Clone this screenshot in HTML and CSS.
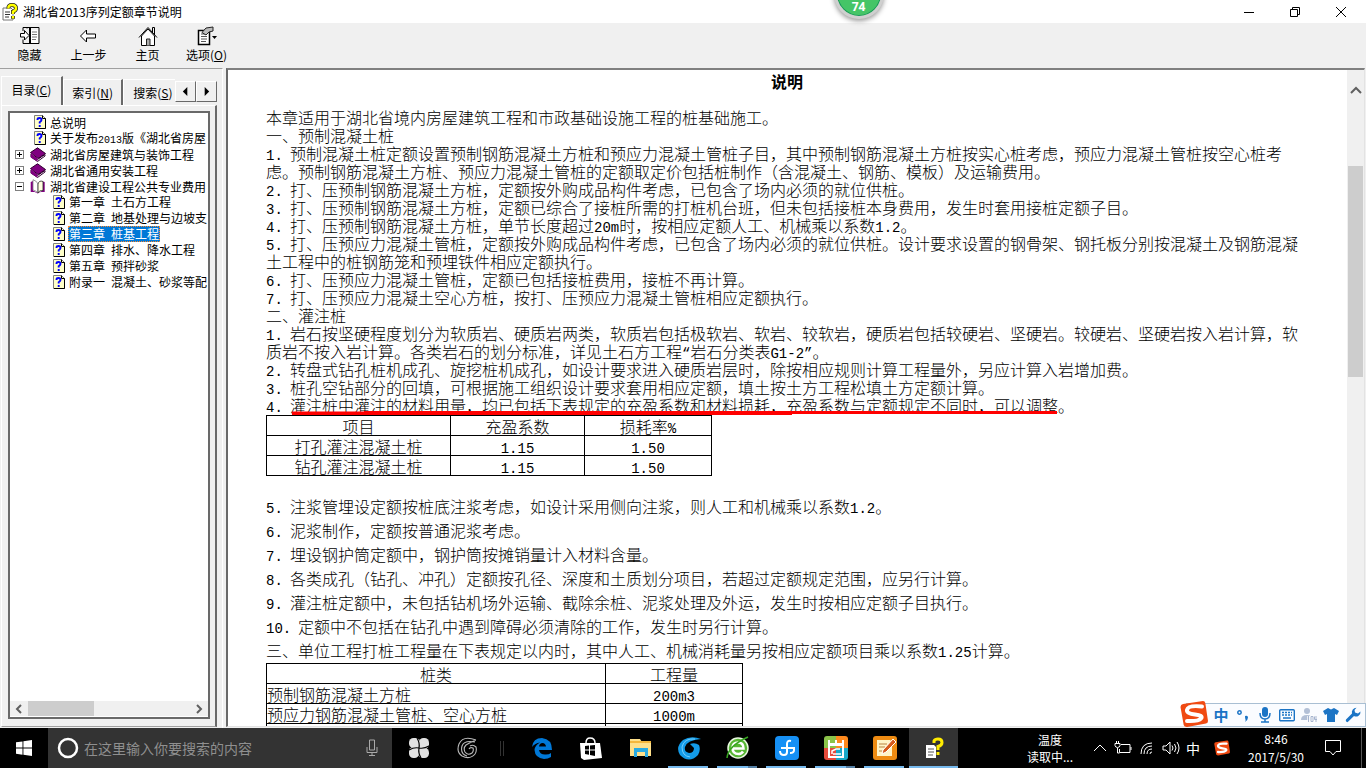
FILE: index.html
```
<!DOCTYPE html>
<html lang="zh-CN">
<head>
<meta charset="utf-8">
<title>湖北省2013序列定额章节说明</title>
<link rel="stylesheet" href="styles.css">
</head>
<body>
<svg class="defs" aria-hidden="true">
  <symbol id="page" viewBox="0 0 12 14"><path d="M.5.5h8l3 3v10H.5z" fill="#ffffc8" stroke="#808080"/><path d="M8.500 .5v3h3v10H1" fill="none" stroke="#000"/><path d="M3.500 5V4.500Q3.500 3 5.500 3T7.500 5Q7.500 6 5.700 7.200V8.600M5.700 10v2" fill="none" stroke="#00f" stroke-width="1.900"/></symbol>
  <symbol id="book" viewBox="0 0 16 15"><path d="M1 7v3l6.500 4.500L15 9V7.500L7.500 12.500z" fill="#fff" stroke="#300030"/><path d="M.5 5.500 7.500.8 15.500 6.500 8 11.500z" fill="#800080" stroke="#300030"/><path d="M.8 6v4.500l6.700 4v-2.800z" fill="#800080"/></symbol>
  <symbol id="openbook" viewBox="0 0 16 15"><path d="M.7 3v10h4l3 1.500 3-1.500h4V3l-2-.5v9L8 14 3 11.500V2z" fill="#800080"/><path d="M3 .7Q7 2 8 5v9Q7 12 3 11z" fill="#fff" stroke="#808080" stroke-width=".8"/><path d="M8 5q1-4 5-2.500v9Q9 11 8 14z" fill="#ffffe0" stroke="#222" stroke-width=".8"/></symbol>
  <symbol id="helpicon" viewBox="0 0 18 18"><path d="M2 5h8l2 2v10H2z" fill="#fff" stroke="#777"/><path d="M4 9h5M4 11.500h5M4 14h4" stroke="#333"/><path d="M7.500 5.500Q7 2 11 2t4 3.500q0 2-3 3.200V11M12 13v2.800" fill="none" stroke="#222" stroke-width="4"/><path d="M7.500 5.500Q7 2 11 2t4 3.500q0 2-3 3.200V11M12 13v2.500" fill="none" stroke="#ff0" stroke-width="2.500"/></symbol>
  <symbol id="sogou" viewBox="0 0 28 28"><path d="M3 4 23 1q2 0 2.300 2L28 21q0 2-2 2.600L7 27q-3 0-3.300-2L.5 7Q.5 4.500 3 4z" fill="#f04a12"/><path d="M22 6.500Q8 5 7 10q-.7 3.500 8 4.500t6 4q-2.500 3-14 2.500" fill="none" stroke="#fff" stroke-width="4" stroke-linecap="round"/></symbol>
</svg>

<header class="titlebar">
  <svg class="appicon" viewBox="0 0 18 18"><use href="#helpicon"/></svg>
  <h1>湖北省2013序列定额章节说明</h1>
  <div class="winbtns">
    <button aria-label="最小化"><svg viewBox="0 0 12 12"><path d="M1 6.500h10" /></svg></button>
    <button aria-label="还原"><svg viewBox="0 0 12 12"><path d="M1.500 3.500h7v7h-7zM3.500 3.500v-2h7v7h-2"/></svg></button>
    <button aria-label="关闭"><svg viewBox="0 0 12 12"><path d="M1 1l10 10M11 1 1 11"/></svg></button>
  </div>
  <div class="badge">74</div>
</header>

<nav class="toolbar">
  <button><svg width="20" height="20" viewBox="0 0 20 20"><path d="M7 2.500V1.500h12v16H3v-4M10.500 2v15M9.500 2v15M3 1.500h7M3 1.500V5" fill="none" stroke="#000"/><path d="M11 4h7v13h-7z" fill="#fff"/><path d="M12 6h5M12 8.500h5M12 11h5M12 13.500h4" stroke="#777"/><path d="M.5 7.500h4v-3L9 9.500 4.500 14v-3h-4z" fill="#fff" stroke="#000"/></svg><span>隐藏</span></button>
  <button><svg width="20" height="20" viewBox="0 0 20 20"><path d="M1.500 10 7.500 4v4h9v4h-9v4z" fill="#fff" stroke="#000"/></svg><span>上一步</span></button>
  <button><svg width="20" height="20" viewBox="0 0 20 20"><path d="M3.500 10v9.500h13V10L10 3z" fill="#fff" stroke="#000"/><path d="M1 11.500 10 1.500l9 10M14.500 6V1.500h2V9" fill="none" stroke="#000"/><path d="M8.500 19.500V13h3.500v6.500" fill="#aaa" stroke="#222"/></svg><span>主页</span></button>
  <button><svg width="20" height="20" viewBox="0 0 20 20"><path d="M1.500 4.500h11v14h-11z" fill="#fff" stroke="#000" stroke-width="1.500"/><path d="M4 8h5M4 10.500h6M4 13h6M4 15.500h5" stroke="#555"/><path d="M5 6.500 9 2l7-1v4l-4 1-3 3z" fill="#bbb" stroke="#222"/><path d="M15 10h5l-2.500 3z"/></svg><span>选项(<u>O</u>)</span></button>
</nav>

<main class="main">
  <aside class="side">
    <div class="tabs">
      <button class="tab on">目录(<u>C</u>)</button><button class="tab">索引(<u>N</u>)</button><button class="tab last">搜索(<u>S</u>)</button>
      <button class="arrow" aria-label="向左"><svg viewBox="0 0 10 10"><path d="M7 0v10L2 5z"/></svg></button><button class="arrow" aria-label="向右"><svg viewBox="0 0 10 10"><path d="M3 0v10l5-5z"/></svg></button>
    </div>
    <div class="sheet">
      <div class="treebox">
        <ul class="tree">
          <li><i class="box none"></i><svg class="pg"><use href="#page"/></svg><a href="#a">总说明</a></li>
          <li><i class="box none"></i><svg class="pg"><use href="#page"/></svg><a href="#a">关于发布<span class="h">2013</span>版《湖北省房屋</a></li>
          <li><i class="box"></i><svg class="bk"><use href="#book"/></svg><a href="#a">湖北省房屋建筑与装饰工程</a></li>
          <li><i class="box"></i><svg class="bk"><use href="#book"/></svg><a href="#a">湖北省通用安装工程</a></li>
          <li><i class="box open"></i><svg class="bk"><use href="#openbook"/></svg><a href="#a">湖北省建设工程公共专业费用</a></li>
          <li class="sub"><svg class="pg"><use href="#page"/></svg><a href="#a">第一章<span class="h"> </span>土石方工程</a></li>
          <li class="sub"><svg class="pg"><use href="#page"/></svg><a href="#a">第二章<span class="h"> </span>地基处理与边坡支</a></li>
          <li class="sub"><svg class="pg"><use href="#page"/></svg><a class="sel" href="#a">第三章<span class="h"> </span>桩基工程</a></li>
          <li class="sub"><svg class="pg"><use href="#page"/></svg><a href="#a">第四章<span class="h"> </span>排水、降水工程</a></li>
          <li class="sub"><svg class="pg"><use href="#page"/></svg><a href="#a">第五章<span class="h"> </span>预拌砂浆</a></li>
          <li class="sub"><svg class="pg"><use href="#page"/></svg><a href="#a">附录一<span class="h"> </span>混凝土、砂浆等配</a></li>
        </ul>
        <div class="hscroll">
          <button aria-label="左滚"><svg viewBox="0 0 10 10"><path d="M7 1 3 5l4 4"/></svg></button>
          <div class="htrack"><div class="hthumb"></div></div>
          <button aria-label="右滚"><svg viewBox="0 0 10 10"><path d="m3 1 4 4-4 4"/></svg></button>
        </div>
      </div>
    </div>
  </aside>

  <div class="viewer">
    <article class="doc">
      <h2>说明</h2>
      <p>本章适用于湖北省境内房屋建筑工程和市政基础设施工程的桩基础施工。</p>
      <p>一、预制混凝土桩</p>
      <p><span class="n c3">1.</span>预制混凝土桩定额设置预制钢筋混凝土方桩和预应力混凝土管桩子目，其中预制钢筋混凝土方桩按实心桩考虑，预应力混凝土管桩按空心桩考虑。预制钢筋混凝土方桩、预应力混凝土管桩的定额取定价包括桩制作（含混凝土、钢筋、模板）及运输费用。</p>
      <p><span class="n c3">2.</span>打、压预制钢筋混凝土方桩，定额按外购成品构件考虑，已包含了场内必须的就位供桩。</p>
      <p><span class="n c3">3.</span>打、压预制钢筋混凝土方桩，定额已综合了接桩所需的打桩机台班，但未包括接桩本身费用，发生时套用接桩定额子目。</p>
      <p><span class="n c3">4.</span>打、压预制钢筋混凝土方桩，单节长度超过<span class="n">20m</span>时，按相应定额人工、机械乘以系数<span class="n">1.2</span>。</p>
      <p><span class="n c3">5.</span>打、压预应力混凝土管桩，定额按外购成品构件考虑，已包含了场内必须的就位供桩。设计要求设置的钢骨架、钢托板分别按混凝土及钢筋混凝土工程中的桩钢筋笼和预埋铁件相应定额执行。</p>
      <p><span class="n c3">6.</span>打、压预应力混凝土管桩，定额已包括接桩费用，接桩不再计算。</p>
      <p><span class="n c3">7.</span>打、压预应力混凝土空心方桩，按打、压预应力混凝土管桩相应定额执行。</p>
      <p>二、灌注桩</p>
      <p><span class="n c3">1.</span>岩石按坚硬程度划分为软质岩、硬质岩两类，软质岩包括极软岩、软岩、较软岩，硬质岩包括较硬岩、坚硬岩。较硬岩、坚硬岩按入岩计算，软质岩不按入岩计算。各类岩石的划分标准，详见土石方工程<span class="n">“</span>岩石分类表<span class="n">G1-2”</span>。</p>
      <p><span class="n c3">2.</span>转盘式钻孔桩机成孔、旋挖桩机成孔，如设计要求进入硬质岩层时，除按相应规则计算工程量外，另应计算入岩增加费。</p>
      <p><span class="n c3">3.</span>桩孔空钻部分的回填，可根据施工组织设计要求套用相应定额，填土按土方工程松填土方定额计算。</p>
      <p class="marked"><span class="n c3">4.</span>灌注桩中灌注的材料用量，均已包括下表规定的充盈系数和材料损耗，充盈系数与定额规定不同时，可以调整。<svg class="redline" viewBox="0 0 765 6" preserveAspectRatio="none"><path d="M0 1.500h72v-.5H765v3H500v1H0z" fill="#f00"/></svg></p>
      <table class="t1">
        <tr><th>项目</th><th>充盈系数</th><th>损耗率<span class="n">%</span></th></tr>
        <tr><td>打孔灌注混凝土桩</td><td><span class="n">1.15</span></td><td><span class="n">1.50</span></td></tr>
        <tr><td>钻孔灌注混凝土桩</td><td><span class="n">1.15</span></td><td><span class="n">1.50</span></td></tr>
      </table>
      <div class="loose">
        <p><span class="n c3">5.</span>注浆管埋设定额按桩底注浆考虑，如设计采用侧向注浆，则人工和机械乘以系数<span class="n">1.2</span>。</p>
        <p><span class="n c3">6.</span>泥浆制作，定额按普通泥浆考虑。</p>
        <p><span class="n c3">7.</span>埋设钢护筒定额中，钢护筒按摊销量计入材料含量。</p>
        <p><span class="n c3">8.</span>各类成孔（钻孔、冲孔）定额按孔径、深度和土质划分项目，若超过定额规定范围，应另行计算。</p>
        <p><span class="n c3">9.</span>灌注桩定额中，未包括钻机场外运输、截除余桩、泥浆处理及外运，发生时按相应定额子目执行。</p>
        <p><span class="n c4">10.</span>定额中不包括在钻孔中遇到障碍必须清除的工作，发生时另行计算。</p>
        <p>三、单位工程打桩工程量在下表规定以内时，其中人工、机械消耗量另按相应定额项目乘以系数<span class="n">1.25</span>计算。</p>
      </div>
      <table class="t2">
        <tr><th>桩类</th><th>工程量</th></tr>
        <tr><td>预制钢筋混凝土方桩</td><td><span class="n">200m3</span></td></tr>
        <tr><td>预应力钢筋混凝土管桩、空心方桩</td><td><span class="n">1000m</span></td></tr>
        <tr><td></td><td></td></tr>
      </table>
    </article>
    <div class="vscroll">
      <button aria-label="上滚"><svg viewBox="0 0 12 10"><path d="M1 8l5-5 5 5"/></svg></button>
      <div class="vtrack"><div class="vthumb"></div></div>
      <button aria-label="下滚"><svg viewBox="0 0 12 10"><path d="M1 2l5 5 5-5"/></svg></button>
    </div>
  </div>

  <div class="ime">
    <svg class="imelogo" viewBox="0 0 28 28"><use href="#sogou"/></svg>
    <button class="zh">中</button>
    <button aria-label="标点"><svg viewBox="0 0 16 16"><circle cx="4.500" cy="5.500" r="1.700" fill="none" stroke="#1b74c5" stroke-width="1.500"/><path d="M10 9q3-1 3 1.500T10 15q1-2 .5-2.500T10 9z"/></svg></button>
    <button aria-label="语音"><svg viewBox="0 0 16 16"><rect x="5" y="0" width="6" height="10" rx="3"/><path d="M3 6q0 6 5 6t5-6M8 12v3M4 15h8" fill="none" stroke="#1b74c5" stroke-width="1.500"/></svg></button>
    <button aria-label="键盘"><svg viewBox="0 0 16 16"><rect x=".7" y="2.700" width="14.600" height="11" rx="1" fill="none" stroke="#1b74c5" stroke-width="1.400"/><path d="M3 5.500h10M3 8h10" stroke="#1b74c5" stroke-width="1.600" stroke-dasharray="2 1"/><path d="M4 11h8" stroke="#1b74c5" stroke-width="1.500"/></svg></button>
    <button aria-label="账户"><svg viewBox="0 0 16 16"><circle cx="6" cy="4" r="3" fill="#b3c0d6"/><path d="M0 13q0-5 6-5t6 5z" fill="#b3c0d6"/><path d="M7.500 9v6M10 9.500h2v5h-2zM13 9.500v3h2.500M15 9v6" fill="none" stroke="#fff" stroke-width="2.400"/><path d="M7.500 9v6M10 9.500h2v5h-2zM13.500 9.500v3H16M15 9v6" fill="none" stroke="#a5b4cf"/></svg></button>
    <button aria-label="皮肤"><svg viewBox="0 0 16 16"><path d="m5 1 3 1.500L11 1l5 3-2 4-2-1v8H4V7L2 8 0 4z"/></svg></button>
    <button aria-label="工具"><svg viewBox="0 0 16 16"><path d="M11.500.8A4.500 4.500 0 0 0 7 6.500L1 12.500q-.8 2 1.500 2.700L9 9a4.500 4.500 0 0 0 6.500-4.500L13 6.500 10 5.500 9.500 3z"/></svg></button>
  </div>
</main>

<footer class="taskbar">
  <button class="start" aria-label="开始"><svg viewBox="0 0 16 16"><path d="M0 2.300 6.500 1.400v6.200H0zM7.400 1.300 16 0v7.600H7.400zM0 8.500h6.500v6.200L0 13.800zM7.400 8.500H16V16l-8.600-1.200z" fill="#fff"/></svg></button>
  <div class="search">
    <svg width="22" height="22" viewBox="0 0 22 22"><circle cx="11" cy="11" r="9" fill="none" stroke="#fff" stroke-width="2.500"/></svg>
    <input type="text" aria-label="搜索" placeholder="在这里输入你要搜索的内容">
    <svg width="12" height="18" viewBox="0 0 12 18"><path d="M3.500 1h5v10h-5zM1 8v5.500h10V8M6 14v3M3 16.500h6" fill="none" stroke="#aaa"/></svg>
  </div>
  <div class="pins">
    <button aria-label="四叶"><svg viewBox="0 0 24 24"><g fill="#e2e2e2"><rect x="2" y="2" width="11" height="10" rx="4.500"/><rect x="12" y="2" width="10" height="11" rx="4.500"/><rect x="11" y="12" width="11" height="10" rx="4.500"/><rect x="2" y="11" width="10" height="11" rx="4.500"/><path d="M8 8h8v8H8z"/></g><path d="M12 12Q13 7 10 2M12 12q5 1 10-2M12 12q-1 5 2 10M12 12Q7 11 2 14" fill="none" stroke="#000" stroke-width="1.200"/></svg></button>
    <button aria-label="旋风"><svg viewBox="0 0 24 24"><path d="M21 4Q14 7 11 9q-3 3-1 7 3 4 7 1 2-2 1-5-3-1-4 1M21 4Q8-1 4 8q-3 8 3 12 8 4 13-2 2-3 1-7-3-3-6-1M20 6Q9 4 7 10q-2 8 5 10" fill="none" stroke="#bbb" stroke-width="1.100"/></svg></button>
    <i class="sep"></i>
  </div>
  <div class="apps">
    <button aria-label="Edge"><svg viewBox="0 0 24 24"><path d="M2 11Q3 2 12 2q10 1 10 12H9q1 5 7 4.500 3 0 5-1.500v4q-3 2-7 2-9-1-9.500-9Q5 9 10 6.500 5 7 2 11zM9 10.500h7Q15.500 7 12.500 7T9 10.500z" fill="#0078d7"/></svg></button>
    <button aria-label="应用商店"><svg viewBox="0 0 24 24"><path d="M1 7h20l2 15-18 2-3-2z" fill="#fff"/><path d="M7 7q0-5 4-5 5 0 5 5" fill="none" stroke="#fff" stroke-width="1.500"/><path d="m6 10 4-.5v4H6zM11 9.500l5-.5v4.500h-5zM6 14.500h4v4.300L6 18zM11 14.500h5V20l-5-1z" fill="#000"/></svg></button>
    <button aria-label="资源管理器"><svg viewBox="0 0 24 24"><path d="M2 3h10l2 3h9v14H2z" fill="#ffe08a"/><path d="M2 5h21v2H2z" fill="#f5b83d"/><path d="M6 12h14v9h-3v-5H9v5H6z" fill="#2aabe2"/></svg></button>
    <button class="run" aria-label="游云"><svg viewBox="0 0 24 24"><path d="M24 3Q14-1 6 4-2 11 3 19q9 9 18 0 3-5 1-10-4-3-9-1l4 4q0 5-5 5-5-1-4-6 2-7 16-8z" fill="#139be8"/><path d="M18 3Q7 2 5 11q0 9 8 10" fill="none" stroke="#75d0ff"/></svg></button>
    <button class="run multi" aria-label="浏览器"><svg viewBox="0 0 24 24"><circle cx="12" cy="12" r="10" fill="#58b735" stroke="#e8f8df" stroke-width="1.500"/><path d="M7 12.500h10.500q0-6-5.500-6t-5.500 5.500q0 6 6 6 3 0 4.500-2.500" fill="none" stroke="#fff" stroke-width="2.500"/><path d="M1 22Q2 10 22 1" fill="none" stroke="#37a521" stroke-width="1.500"/></svg></button>
    <button class="run" aria-label="卓越"><svg viewBox="0 0 24 24"><rect width="24" height="24" rx="4" fill="#1690f5"/><path d="M16 5q-4-1-4 3v8q0 3-3 3-4 0-4-4M6 12h13v2q0 3-4 3" fill="none" stroke="#fff" stroke-width="2"/></svg></button>
    <button class="run multi" aria-label="图表"><svg viewBox="0 0 24 24"><path d="M0 3q0-3 3-3h9v12H0z" fill="#8bc34a"/><path d="M12 0h9q3 0 3 3v9H12z" fill="#ff8a1e"/><path d="M0 12h12v12H3q-3 0-3-3z" fill="#e64b3c"/><path d="M12 12h12v9q0 3-3 3h-9z" fill="#17a9c9"/><path d="M5 9h14v12H5zM5 4v4h14V4M12 4v4" fill="none" stroke="#fff" stroke-width="2"/><path d="M8 18v-3l4-2h4M9 18h8" fill="none" stroke="#fff" stroke-width="1.500"/></svg></button>
    <button class="run" aria-label="笔记"><svg viewBox="0 0 24 24"><rect width="24" height="24" rx="3" fill="#ee8b12"/><path d="M4 4h13l2 2v14H4z" fill="#fff4c7"/><path d="M6 8h8M6 11h6M6 15h3" stroke="#b98243"/><path d="m9 18 1-4L20 3l3 3-10 10z" fill="#d65a1c" stroke="#fff"/></svg></button>
    <button class="run active" aria-label="帮助"><svg viewBox="0 0 24 24"><path d="M4 9h8l2 2v11H4z" fill="#fff"/><path d="M6 13h6M6 16h6M6 19h5" stroke="#555"/><path d="M12 7V5q1-2 4-2 4 0 4 3.500 0 3-4 4V14M16 16v3" fill="none" stroke="#ffeb00" stroke-width="3"/></svg></button>
  </div>
  <div class="tray">
    <div class="temp">温度<br>读取中...</div>
    <svg width="14" height="14" viewBox="0 0 14 14"><path d="m1 10 6-6 6 6"/></svg>
    <svg width="18" height="16" viewBox="0 0 18 16"><path d="M7 4.500h9v8H5.500V9M17 7v3M1 3.500h5v2q-.5 2-2.500 2T1 5.500zM2.500 1v2M4.500 1v2M3.500 8v5h2"/></svg>
    <svg width="16" height="16" viewBox="0 0 16 16"><path d="M2 14Q2 3 13 3M5 14Q5 6 13 6M8 14q0-5 5-5M11 14q0-2 2-2" /></svg>
    <svg width="18" height="16" viewBox="0 0 18 16"><path d="M1 6h3l4-4v12L4 10H1zM10 5.500q2 2.500 0 5M12.500 4q3 4 0 8M15 2q4 6 0 12"/></svg>
    <span class="lang">中</span>
    <svg class="s2" width="16" height="16" viewBox="0 0 28 28"><use href="#sogou"/></svg>
    <div class="clock">8:46<br>2017/5/30</div>
    <svg class="note" width="18" height="18" viewBox="0 0 18 18"><path d="M1.500 1.500h15v11H12L9 16l-3-3.500H1.500z"/></svg>
    <i class="peek"></i>
  </div>
</footer>
</body>
</html>
```
FILE: styles.css
```
* { box-sizing: border-box; }
body {
  margin: 0;
  height: 100vh;
  display: flex;
  flex-direction: column;
  overflow: hidden;
  background: #f0f0f0;
  color: #000;
  font: 12px/16px "Noto Sans CJK SC", sans-serif;
  text-spacing-trim: space-all;
}
button {
  margin: 0;
  padding: 0;
  border: 0;
  background: none;
  color: inherit;
  font: inherit;
  display: flex;
  align-items: center;
  justify-content: center;
}
a { color: inherit; text-decoration: none; }
.defs { display: none; }

/* title bar */
.titlebar {
  position: relative;
  flex: none;
  height: 23px;
  display: flex;
  align-items: center;
  padding: 0 2px 0 1px;
  background: #fff;
}
.titlebar h1 { margin: 0 auto 0 4px; font-size: 12px; font-weight: 400; }
.appicon { width: 18px; height: 18px; }
.winbtns { display: flex; }
.winbtns button { width: 46px; height: 20px; }
.winbtns svg { width: 12px; height: 12px; fill: none; stroke: #000; }
.badge {
  position: absolute;
  top: -31px;
  left: calc(63% - 27px);
  width: 50px;
  height: 50px;
  padding-top: 27px;
  border: 3px solid #cfcfcf;
  border-radius: 50%;
  background: #45c567;
  box-shadow: inset 0 0 0 1px #18965a, 0 2px 5px #999;
  color: #fff;
  font: bold 12px/16px "Noto Sans", sans-serif;
  text-align: center;
  z-index: 2;
}

/* toolbar */
.toolbar { flex: none; display: flex; height: 45px; }
.toolbar button {
  width: 59px;
  flex-direction: column;
  justify-content: flex-start;
  gap: 1px;
  padding-top: 3px;
}

.main { position: relative; flex: 1; min-height: 0; display: flex; }

/* navigation pane */
.side {
  width: 223px;
  flex: none;
  display: flex;
  flex-direction: column;
  padding: 7px 5px 1px 1px;
  border-top: 1px solid #a0a0a0;
  border-right: 1px solid #fff;
}
.tabs { display: flex; align-items: flex-end; height: 29px; }
.tab {
  width: 61px;
  height: 26px;
  border-top: 1px solid #fff;
  border-left: 1px solid #fff;
  border-right: 2px solid #696969;
}
.tab.on { width: 62px; height: 29px; padding-bottom: 3px; }
.tab.last { width: 52px; padding-left: 6px; border-right: 0; overflow: hidden; }
.arrow {
  width: 21px;
  height: 21px;
  margin-bottom: 3px;
  border: 1px solid;
  border-color: #fff #696969 #696969 #fff;
}
.arrow svg { width: 9px; height: 9px; }
.sheet {
  flex: 1;
  min-height: 0;
  display: flex;
  padding: 5px 5px 7px 6px;
  border: 1px solid;
  border-color: #fff #a0a0a0 #a0a0a0 #fff;
  border-right: 2px solid #696969;
}
.treebox {
  flex: 1;
  min-width: 0;
  display: flex;
  flex-direction: column;
  border: 2px solid #696969;
  background: #fff;
}
.tree { flex: 1; margin: 0; padding: 1px 0; list-style: none; overflow: hidden; }
.tree li { display: flex; align-items: center; height: 16px; padding-left: 5px; white-space: nowrap; }
.tree a { line-height: 15px; padding: 0 1px; }
.tree svg { flex: none; }
.pg { width: 12px; height: 14px; margin-right: 3px; }
.tree li.sub { padding-left: 43px; }
.bk { width: 16px; height: 15px; margin: 0 3px 0 6px; }
.box {
  flex: none;
  width: 9px;
  height: 9px;
  border: 1px solid #808080;
  background: linear-gradient(#000, #000) center/5px 1px no-repeat, linear-gradient(#000, #000) center/1px 5px no-repeat;
}
.box.open { background: linear-gradient(#000, #000) center/5px 1px no-repeat; }
.box.none { visibility: hidden; margin-right: 10px; }
.tree .sel { background: #0078d7; color: #fff; outline: 1px dotted #ff8728; outline-offset: -1px; }
.h { font-family: "Liberation Mono", monospace; font-size: 10px; line-height: 1; }
.hscroll { display: flex; height: 15px; background: #f0f0f0; margin-bottom: 1px; }
.hscroll button { width: 18px; }
.hscroll svg, .vscroll svg { width: 10px; height: 10px; fill: none; stroke: #606060; stroke-width: 2; }
.vscroll svg { width: 12px; }
.htrack { flex: 1; }
.hthumb { width: 41%; height: 15px; background: #cdcdcd; }

/* document */
.viewer {
  flex: 1;
  min-width: 0;
  display: flex;
  margin: 0 1px 1px 3px;
  border: 2px solid #696969;
  border-top-color: #808080;
  border-right: 1px solid #e3e3e3;
  border-bottom: 1px solid #e3e3e3;
  background: #fff;
}
.doc {
  flex: 1;
  min-width: 0;
  overflow: hidden;
  padding: 2px 39px 0 38px;
  font-size: 16px;
  font-weight: 300;
  line-height: 18px;
}
.doc h2 { margin: 0 0 18px; font-size: 16px; line-height: 18px; font-weight: 700; text-align: center; }
.doc p { margin: 0; }
.n {
  display: inline-block;
  font-family: "Liberation Mono", monospace;
  font-size: 14px;
  font-weight: 400;
  line-height: 10px;
}
/* slots for the paragraph numbers */
.c3 { width: 24px; }
.c4 { width: 32px; }
.marked { position: relative; }
.redline { position: absolute; left: 26px; top: 14px; width: 765px; height: 6px; }
.doc table { border-collapse: collapse; table-layout: fixed; }
.doc th, .doc td {
  height: 20px;
  padding: 0;
  border: 1px solid #000;
  font-weight: inherit;
  line-height: 18px;
  text-align: center;
}
.t1 { width: 446px; margin-top: 1px; }
.t1 th:nth-child(1) { width: 184px; }
.t1 th:nth-child(2) { width: 134px; }
.t2 { width: 477px; margin-top: 1px; }
.t2 th:nth-child(1) { width: 339px; }
.doc .t2 td:first-child { text-align: left; }
.loose { margin-top: 18px; line-height: 24px; }

.vscroll { flex: none; width: 17px; display: flex; flex-direction: column; background: #f0f0f0; }
.vscroll button { height: 40px; }
.vscroll button:last-child { height: 20px; }
.vtrack { flex: 1; padding: 56px 1px 0; }
.vthumb { height: 39%; background: #cdcdcd; }

/* input method bar */
.ime {
  position: absolute;
  right: 0;
  bottom: 1px;
  height: 24px;
  display: flex;
  align-items: center;
  gap: 6px;
  padding: 0 4px 0 26px;
  border: 1px solid #a9bfd3;
  background: #fafcff;
  color: #1b74c5;
  fill: #1b74c5;
}
.ime button, .ime button svg { width: 16px; height: 16px; }
.ime .zh { font-size: 15px; font-weight: 700; }
.imelogo { position: absolute; left: -7px; top: -4px; width: 28px; height: 28px; }

/* taskbar */
.taskbar { flex: none; display: flex; height: 40px; background: #000; color: #fff; }
.start { width: 48px; }
.start svg { width: 16px; height: 16px; }
.search {
  width: 344px;
  display: flex;
  align-items: center;
  gap: 5px;
  padding: 0 14px 0 9px;
  background: #333;
}
.search input {
  flex: 1;
  min-width: 0;
  padding: 0;
  border: 0;
  background: none;
  color: #fff;
  font: 14px/20px "Noto Sans CJK SC", sans-serif;
}
.search input::placeholder { color: #8f8f8f; }
.pins { display: flex; align-items: center; width: 125px; padding-left: 3px; }
.pins button { width: 48px; height: 40px; }
.pins svg, .apps svg { width: 24px; height: 24px; }
.sep { width: 4px; height: 15px; margin-left: 9px; border: 1px solid #333; border-width: 0 1px; }
.apps { display: flex; }
.apps button { width: 49px; height: 40px; position: relative; }
.run::after {
  content: "";
  position: absolute;
  left: 4px;
  right: 5px;
  bottom: 0;
  height: 2px;
  background: #76b9ed;
}
.multi::after { background: linear-gradient(90deg, #76b9ed 31px, #5580a5 31px); }
.active { background: #333; }
.active::after { left: 0; right: 0; }
.tray { margin-left: auto; display: flex; align-items: center; }
.tray svg { fill: none; stroke: #fff; margin-right: 7px; }
.temp { width: 60px; margin-right: 13px; line-height: 17px; text-align: center; }
.lang { margin: 0 14px 0 -1px; font-size: 14px; }
.tray .s2 { stroke: none; margin: 0; }
.clock { width: 70px; margin: 0 13px 0 11px; line-height: 18px; text-align: center; }
.tray .note { margin-right: 19px; }
.peek { width: 5px; height: 40px; border-left: 1px solid #555; }
```
